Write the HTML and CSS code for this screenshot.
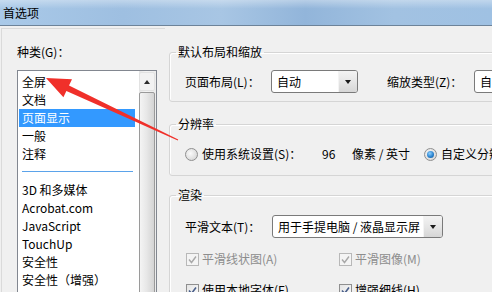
FILE: index.html
```html
<!DOCTYPE html>
<html lang="zh-CN">
<head>
    <meta charset="UTF-8">
    <title>首选项</title>
    <link rel="stylesheet" href="styles.css">
</head>
<body>
    <div class="window">
        <div class="titlebar"><span class="title">首选项</span></div>
        <div class="content">
            <div class="categories">
                <div class="cat-label">种类(G)：</div>
                <div class="listbox">
                    <ul class="items">
                        <li>全屏</li>
                        <li>文档</li>
                        <li class="selected">页面显示</li>
                        <li>一般</li>
                        <li>注释</li>
                        <li class="sep"></li>
                        <li>3D 和多媒体</li>
                        <li>Acrobat.com</li>
                        <li>JavaScript</li>
                        <li>TouchUp</li>
                        <li>安全性</li>
                        <li>安全性（增强）</li>
                    </ul>
                    <div class="scrollbar">
                        <div class="sb-up"><span class="arrow-up"></span></div>
                        <div class="sb-thumb"></div>
                    </div>
                </div>
            </div>
            <div class="settings">
                <fieldset class="group group-layout">
                    <legend>默认布局和缩放</legend>
                    <div class="row">
                        <span class="field-label">页面布局(L)：</span>
                        <div class="combo combo-short"><span class="value">自动</span><span class="drop"><span class="arrow-down"></span></span></div>
                        <span class="field-label zoom-label">缩放类型(Z)：</span>
                        <div class="combo combo-short"><span class="value">自动</span><span class="drop"><span class="arrow-down"></span></span></div>
                    </div>
                </fieldset>
                <fieldset class="group group-res">
                    <legend>分辨率</legend>
                    <div class="row">
                        <span class="radio"></span>
                        <span class="radio-text sys">使用系统设置(S)：</span>
                        <span class="dpi">96</span>
                        <span class="unit">像素 / 英寸</span>
                        <span class="radio checked"></span>
                        <span class="radio-text">自定义分辨率(U)：</span>
                    </div>
                </fieldset>
                <fieldset class="group group-render">
                    <legend>渲染</legend>
                    <div class="row">
                        <span class="field-label">平滑文本(T)：</span>
                        <div class="combo combo-long"><span class="value">用于手提电脑 / 液晶显示屏</span><span class="drop"><span class="arrow-down"></span></span></div>
                    </div>
                    <div class="check-row">
                        <span class="check-item disabled">
                            <span class="checkbox"><svg width="11" height="11" viewBox="0 0 11 11"><path d="M2 5.5 L4.5 8.5 L9 2.5" fill="none" stroke="#a8a8a8" stroke-width="1.4"/></svg></span>平滑线状图(A)
                        </span>
                        <span class="check-item disabled">
                            <span class="checkbox"><svg width="11" height="11" viewBox="0 0 11 11"><path d="M2 5.5 L4.5 8.5 L9 2.5" fill="none" stroke="#a8a8a8" stroke-width="1.4"/></svg></span>平滑图像(M)
                        </span>
                    </div>
                    <div class="check-row">
                        <span class="check-item">
                            <span class="checkbox"><svg width="11" height="11" viewBox="0 0 11 11"><path d="M2 5.5 L4.5 8.5 L9 2.5" fill="none" stroke="#4a5f8a" stroke-width="1.6"/></svg></span>使用本地字体(F)
                        </span>
                        <span class="check-item">
                            <span class="checkbox"><svg width="11" height="11" viewBox="0 0 11 11"><path d="M2 5.5 L4.5 8.5 L9 2.5" fill="none" stroke="#4a5f8a" stroke-width="1.6"/></svg></span>增强细线(H)
                        </span>
                    </div>
                </fieldset>
            </div>
        </div>
        <svg class="annotation" width="492" height="292" viewBox="0 0 492 292">
            <polygon points="46,78 72,79.2 69,85.5 178.2,139.5 177.8,140.5 66.4,90.9 63.4,97.3" fill="#f0302a"/>
        </svg>
    </div>
</body>
</html>
```

FILE: styles.css
```css
body {
    margin: 0;
    background: #f0f0f0;
    font-family: "Noto Sans CJK SC", "Microsoft YaHei", sans-serif;
    font-size: 12px;
    color: #000;
}
.window {
    position: relative;
    width: 492px;
    height: 292px;
    overflow: hidden;
}
.titlebar {
    height: 25px;
    border-bottom: 1px solid #6d8399;
    background:
        linear-gradient(to bottom, rgba(255, 255, 255, 0.35) 0, rgba(255, 255, 255, 0) 35%),
        linear-gradient(90deg, #a9c9e8 0, #9ebfe1 25%, #a8c6e4 45%, #92b5da 62%, #a2c2e2 80%, #9fc1e3 100%);
    display: flex;
    align-items: center;
    padding-left: 3px;
}
.title {
    line-height: 16px;
}
.content {
    display: flex;
}
.categories {
    flex-shrink: 0;
    width: 164px;
    height: 270px;
    margin: 2px 0 0 1px;
    border-top: 1px solid #dadada;
    border-left: 1px solid #dadada;
    padding: 14px 0 0 15px;
    box-sizing: border-box;
}
.cat-label {
    line-height: 18px;
    margin-bottom: 9px;
}
.listbox {
    width: 140px;
    height: 240px;
    box-sizing: border-box;
    border: 1px solid #828790;
    background: #fff;
    display: flex;
    justify-content: space-between;
}
.items {
    list-style: none;
    margin: 0;
    padding: 2px 0 0 1px;
    width: 116px;
}
.items li {
    height: 18px;
    line-height: 18px;
    padding-left: 3px;
    white-space: nowrap;
}
.items li.selected {
    background: #3399ff;
    color: #fff;
}
.items li.sep {
    box-sizing: border-box;
    padding-top: 8px;
}
.items li.sep::after {
    content: "";
    display: block;
    width: 111px;
    height: 1px;
    background: #5ba3ea;
}
.scrollbar {
    width: 17px;
    background: linear-gradient(90deg, #e6e6e6, #f4f4f4 40%, #ececec);
}
.sb-up {
    height: 19px;
    margin: 1px 1px 0 0;
    box-sizing: border-box;
    border: 1px solid #e2e2e2;
    border-radius: 2px;
    background: #f2f2f2;
    display: flex;
    align-items: center;
    justify-content: center;
}
.arrow-up {
    width: 0;
    height: 0;
    border-left: 3.5px solid transparent;
    border-right: 3.5px solid transparent;
    border-bottom: 4px solid #2b2b2b;
}
.sb-thumb {
    height: 230px;
    margin: 1px 1px 0 0;
    box-sizing: border-box;
    border: 1px solid #9a9a9a;
    border-radius: 2px;
    background: linear-gradient(90deg, #f4f4f4 0, #e8e8e8 45%, #d4d4d4 100%);
}
.settings {
    padding-left: 4px;
}
.group {
    width: 420px;
    margin: 0;
    border: 1px solid #d5d5d5;
    border-radius: 3px;
    box-shadow: inset 1px 1px 0 #fff;
    padding: 0 0 0 15px;
}
.group legend {
    margin-left: -9px;
    padding: 0 2px;
    line-height: 16px;
}
.group-layout {
    margin-top: 18px;
    padding-top: 10px;
    padding-bottom: 8px;
}
.group-res {
    margin-top: 14px;
    padding-top: 13px;
    padding-bottom: 12px;
}
.group-render {
    margin-top: 11px;
    padding-top: 12px;
    height: 120px;
}
.row {
    display: flex;
    align-items: center;
    white-space: nowrap;
}
.field-label {
    width: 86px;
    line-height: 23px;
}
.zoom-label {
    margin-left: 29px;
    width: 87px;
}
.combo {
    height: 23px;
    box-sizing: border-box;
    border: 1px solid #7a7a7a;
    border-radius: 3px;
    background: #fff;
    display: flex;
    overflow: hidden;
    flex-shrink: 0;
}
.combo-short {
    width: 87px;
}
.combo-long {
    width: 171px;
    margin-left: 1px;
}
.combo .value {
    flex: 1;
    padding-left: 5px;
    line-height: 21px;
    white-space: nowrap;
    overflow: hidden;
}
.combo .drop {
    width: 18px;
    border-left: 1px solid #f4f4f4;
    background: linear-gradient(to bottom, #f3f3f3 0, #e6e6e6 50%, #d6d6d6 100%);
    display: flex;
    align-items: center;
    justify-content: center;
}
.arrow-down {
    width: 0;
    height: 0;
    border-left: 3.5px solid transparent;
    border-right: 3.5px solid transparent;
    border-top: 4px solid #1a1a1a;
}
.group-res .row {
    line-height: 18px;
}
.radio {
    width: 13px;
    height: 13px;
    box-sizing: border-box;
    border: 1px solid #8f8f8f;
    border-radius: 50%;
    background: radial-gradient(circle at 40% 40%, #fafafa 0, #dcdcdc 70%, #c8c8c8 100%);
    flex-shrink: 0;
    display: flex;
    align-items: center;
    justify-content: center;
}
.radio.checked::after {
    content: "";
    width: 7px;
    height: 7px;
    border-radius: 50%;
    background: radial-gradient(circle at 40% 35%, #8fd0ff 0, #2a83cf 55%, #0f4f8e 100%);
}
.radio-text {
    margin-left: 4px;
}
.radio-text.sys {
    width: 120px;
}
.dpi {
    width: 30px;
}
.unit {
    width: 72px;
}
.check-row {
    display: flex;
    margin-top: 12px;
    line-height: 18px;
    white-space: nowrap;
}
.check-row + .check-row {
    margin-top: 13px;
}
.check-item {
    display: flex;
    align-items: center;
    width: 153px;
}
.check-item.disabled {
    color: #8d8d8d;
}
.checkbox {
    width: 13px;
    height: 13px;
    box-sizing: border-box;
    margin: 0 3px 0 1px;
    border: 1px solid #8f8f8f;
    background: linear-gradient(135deg, #e4e4e4, #fbfbfb);
    display: flex;
    align-items: center;
    justify-content: center;
}
.check-item.disabled .checkbox {
    border-color: #b8b8b8;
    background: #f4f4f4;
}
.annotation {
    position: absolute;
    left: 0;
    top: 0;
    pointer-events: none;
}
```
